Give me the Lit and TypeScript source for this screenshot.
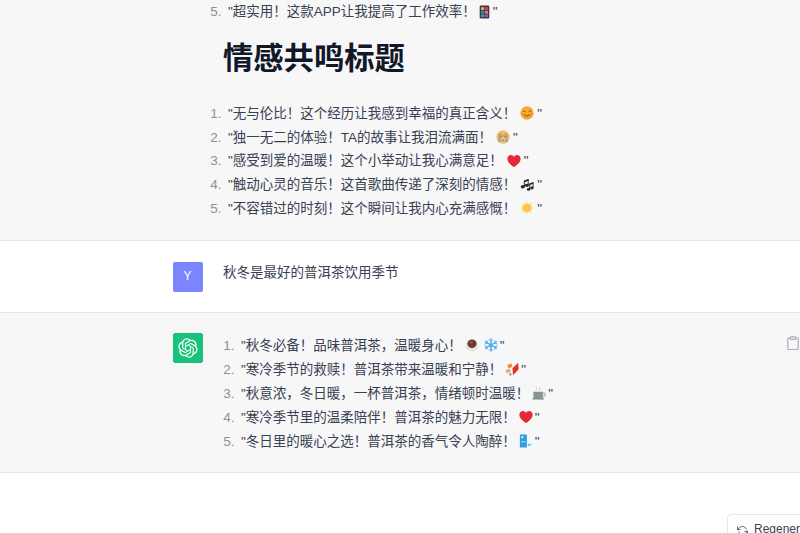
import { LitElement, html, css, svg } from "lit";
import { customElement } from "lit/decorators.js";

const OPENAI = "M37.5324 16.8707C37.9808 15.5241 38.1363 14.0974 37.9886 12.6859C37.8409 11.2744 37.3934 9.91076 36.676 8.68622C35.6126 6.83404 33.9882 5.3676 32.0373 4.4985C30.0864 3.62941 27.9098 3.40259 25.8215 3.85078C24.8796 2.7893 23.7219 1.94125 22.4257 1.36341C21.1295 0.785575 19.7249 0.491269 18.3058 0.500197C16.1708 0.495044 14.0893 1.16803 12.3614 2.42214C10.6335 3.67624 9.34853 5.44666 8.6917 7.47815C7.30085 7.76286 5.98686 8.3414 4.8377 9.17505C3.68854 10.0087 2.73073 11.0782 2.02839 12.312C0.956464 14.1591 0.498905 16.2988 0.721698 18.4228C0.944492 20.5467 1.83612 22.5449 3.268 24.1293C2.81966 25.4759 2.66413 26.9026 2.81182 28.3141C2.95951 29.7256 3.40701 31.0892 4.12437 32.3138C5.18791 34.1659 6.8123 35.6322 8.76321 36.5013C10.7141 37.3704 12.8907 37.5973 14.9789 37.1492C15.9208 38.2107 17.0786 39.0587 18.3747 39.6366C19.6709 40.2144 21.0755 40.5087 22.4946 40.4998C24.6307 40.5054 26.7133 39.8321 28.4418 38.5772C30.1704 37.3223 31.4556 35.5506 32.1119 33.5179C33.5027 33.2332 34.8167 32.6547 35.9659 31.821C37.115 30.9874 38.0728 29.9178 38.7752 28.684C39.8458 26.8371 40.3023 24.6979 40.0789 22.5748C39.8556 20.4517 38.9639 18.4544 37.5324 16.8707ZM22.4978 37.8849C20.7443 37.8874 19.0459 37.2733 17.6994 36.1501C17.7601 36.117 17.8666 36.0586 17.936 36.0161L25.9004 31.4156C26.1003 31.3019 26.2663 31.137 26.3813 30.9378C26.4964 30.7386 26.5563 30.5124 26.5549 30.2825V19.0542L29.9213 20.998C29.9389 21.0068 29.9541 21.0198 29.9656 21.0359C29.977 21.052 29.9842 21.0707 29.9867 21.0902V30.3889C29.9842 32.375 29.1946 34.2791 27.7909 35.6841C26.3872 37.0892 24.4838 37.8806 22.4978 37.8849ZM6.39227 31.0064C5.51397 29.4888 5.19742 27.7107 5.49804 25.9832C5.55718 26.0187 5.66048 26.0818 5.73461 26.1244L13.699 30.7248C13.8975 30.8408 14.1233 30.902 14.3532 30.902C14.583 30.902 14.8088 30.8408 15.0073 30.7248L24.731 25.1103V28.9979C24.7321 29.0177 24.7283 29.0376 24.7199 29.0556C24.7115 29.0736 24.6988 29.0893 24.6829 29.1012L16.6317 33.7497C14.9096 34.7416 12.8643 35.0097 10.9447 34.4954C9.02506 33.9811 7.38785 32.7263 6.39227 31.0064ZM4.29707 13.6194C5.17156 12.0998 6.55279 10.9364 8.19885 10.3327C8.19885 10.4013 8.19491 10.5228 8.19491 10.6071V19.808C8.19351 20.0378 8.25334 20.2638 8.36823 20.4629C8.48312 20.6619 8.64893 20.8267 8.84863 20.9404L18.5723 26.5542L15.206 28.4979C15.1894 28.5089 15.1703 28.5155 15.1505 28.5173C15.1307 28.5191 15.1107 28.516 15.0924 28.5082L7.04046 23.8557C5.32135 22.8601 4.06716 21.2235 3.55289 19.3046C3.03862 17.3858 3.30624 15.3413 4.29707 13.6194ZM31.955 20.0556L22.2312 14.4411L25.5976 12.4981C25.6142 12.4872 25.6333 12.4805 25.6531 12.4787C25.6729 12.4769 25.6928 12.4801 25.7111 12.4879L33.7631 17.1364C34.9967 17.849 36.0017 18.8982 36.6606 20.1613C37.3194 21.4244 37.6047 22.849 37.4832 24.2684C37.3617 25.6878 36.8382 27.0432 35.9743 28.1759C35.1103 29.3086 33.9415 30.1717 32.6047 30.6641C32.6047 30.5947 32.6047 30.4733 32.6047 30.3889V21.188C32.6066 20.9586 32.5474 20.7328 32.4332 20.5338C32.319 20.3348 32.154 20.1698 31.955 20.0556ZM35.3055 15.0128C35.2464 14.9765 35.1431 14.9142 35.069 14.8717L27.1045 10.2712C26.906 10.1554 26.6803 10.0943 26.4504 10.0943C26.2206 10.0943 25.9948 10.1554 25.7963 10.2712L16.0726 15.8858V11.9982C16.0715 11.9783 16.0753 11.9585 16.0837 11.9405C16.0921 11.9225 16.1048 11.9068 16.1207 11.8949L24.1719 7.25025C25.4053 6.53903 26.8158 6.19376 28.2383 6.25482C29.6608 6.31589 31.0364 6.78077 32.2044 7.59508C33.3723 8.40939 34.2842 9.53945 34.8334 10.8531C35.3826 12.1667 35.5464 13.6095 35.3055 15.0128ZM14.2424 21.9419L10.8752 19.9981C10.8576 19.9893 10.8423 19.9763 10.8309 19.9602C10.8195 19.9441 10.8122 19.9254 10.8098 19.9058V10.6071C10.8107 9.18295 11.2173 7.78848 11.9819 6.58696C12.7466 5.38544 13.8377 4.42659 15.1275 3.82264C16.4173 3.21869 17.8524 2.99464 19.2649 3.1767C20.6775 3.35876 22.0089 3.93941 23.1034 4.85067C23.0427 4.88379 22.937 4.94215 22.8668 4.98473L14.9024 9.58517C14.7025 9.69878 14.5366 9.86356 14.4215 10.0626C14.3065 10.2616 14.2466 10.4877 14.2479 10.7175L14.2424 21.9419ZM16.071 17.9991L20.4018 15.4978L24.7325 17.9975V22.9985L20.4018 25.4983L16.071 22.9985V17.9991Z";

const emoji = (body: unknown) =>
  html`<svg class="emoji" viewBox="0 0 16 16" aria-hidden="true">${body}</svg>`;

const E = {
  phone: html`<svg class="emoji narrow" viewBox="2 0 12 16" aria-hidden="true">
    <rect x="2.5" y=".5" width="11" height="15" rx="1.5" fill="#3b3560"></rect>
    <rect x="4" y="2.5" width="3.6" height="3.2" fill="#e8b23a"></rect>
    <rect x="8.4" y="2.5" width="3.6" height="3.2" fill="#d9483b"></rect>
    <rect x="4" y="6.6" width="3.6" height="3.2" fill="#3b82d0"></rect>
    <rect x="8.4" y="6.6" width="3.6" height="3.2" fill="#e8843a"></rect>
    <rect x="4" y="10.7" width="3.6" height="3" fill="#4aa564"></rect>
    <rect x="8.4" y="10.7" width="3.6" height="3" fill="#a14fc0"></rect>
  </svg>`,
  smile: emoji(svg`<circle cx="8" cy="8" r="7.6" fill="#f6a832"/><path d="M3.5 6.4q1.3-1.5 2.6 0M9.9 6.4q1.3-1.5 2.6 0" stroke="#7a4a12" stroke-width="1" fill="none"/><path d="M4.4 9.6q3.6 3.8 7.2 0" stroke="#7a4a12" stroke-width="1.1" fill="none"/><ellipse cx="3" cy="9.2" rx="1.4" ry="1" fill="#f28b5c"/><ellipse cx="13" cy="9.2" rx="1.4" ry="1" fill="#f28b5c"/>`),
  cry: emoji(svg`<circle cx="8" cy="8" r="7.6" fill="#f4bd62"/><circle cx="5" cy="6.6" r="1.9" fill="#fff" stroke="#6b4a2a" stroke-width=".7"/><circle cx="11" cy="6.6" r="1.9" fill="#fff" stroke="#6b4a2a" stroke-width=".7"/><circle cx="5" cy="6.8" r=".8" fill="#4a3222"/><circle cx="11" cy="6.8" r=".8" fill="#4a3222"/><path d="M5.8 12q2.2-2 4.4 0z" fill="#8a3a2a"/><path d="M2.6 9.5h2.2l.2 4.5H3zM11.2 9.5h2.2l-.4 4.5h-2z" fill="#6fa8e0"/>`),
  heart: emoji(svg`<path d="M8 15.2C3.2 11.6.4 8.9.4 5.5.4 2.9 2.4 1.2 4.5 1.2c1.5 0 2.8.8 3.5 2.1.7-1.3 2-2.1 3.5-2.1 2.1 0 4.1 1.7 4.1 4.3 0 3.4-2.8 6.1-7.6 9.7z" fill="#e5283a"/>`),
  notes: emoji(svg`<g fill="#26262a"><path d="M4.6 2.8l5-1.8v2.2L4.6 5z"/><path d="M4.4 3.2h1.1v6.6H4.4zM8.8 1.4h1.1v6.8H8.8z"/><ellipse cx="3.2" cy="10" rx="2.4" ry="1.9"/><ellipse cx="7.8" cy="8.4" rx="2.4" ry="1.9"/><path d="M10.6 6.2l4.6-1.6v2l-4.6 1.6z"/><path d="M10.6 6.6h1v6h-1zM14.4 5h1v6h-1z"/><ellipse cx="9.8" cy="13" rx="2" ry="1.7"/><ellipse cx="13.6" cy="11.4" rx="2" ry="1.7"/></g>`),
  sun: emoji(svg`<path d="M8 .2l1.7 3.3 3.6-1.4-.6 3.8 3.1 2-3.1 2 .6 3.8-3.6-1.3L8 15.8l-1.7-3.4-3.6 1.3.6-3.8L.2 7.9l3.1-2-.6-3.8 3.6 1.4z" fill="#fbe08a"/><circle cx="8" cy="8" r="4.6" fill="#f7c948"/>`),
  tea: emoji(svg`<ellipse cx="8" cy="8.5" rx="7.4" ry="7" fill="#e6e4e0"/><ellipse cx="8" cy="6.6" rx="5.2" ry="4.8" fill="#6b3a2a"/><ellipse cx="7" cy="5.2" rx="2" ry="1.1" fill="#96604a"/>`),
  snow: emoji(svg`<g stroke="#4fb0ec" stroke-linecap="round" fill="none"><path d="M8 .8v14.4M1.8 4.4l12.4 7.2M14.2 4.4L1.8 11.6" stroke-width="1.6"/><path d="M5.8 2L8 4.2 10.2 2M5.8 14L8 11.8l2.2 2.2M1 6.8l3-.8-.8-3M15 9.2l-3 .8.8 3M15 6.8l-3-.8.8-3M1 9.2l3 .8-.8 3" stroke-width="1.1"/></g>`),
  gift: emoji(svg`<path d="M2.6 3.4l4.8-2 1 4.4-4.6 1.4z" fill="#e78c48"/><path d="M.6 9l5-1.4 1 3.8-4.4 1.4z" fill="#eaa873"/><path d="M4.4 13.4l2.6-.9.7 2.6-2.5.6z" fill="#d8853e"/><path d="M9.2 15L8.6 7.2 15 .8l.6 7.4z" fill="#e52f2a"/>`),
  cup: emoji(svg`<path d="M1.6 6.5h10.8v6.7a1 1 0 01-1 1H2.6a1 1 0 01-1-1z" fill="#8a9488"/><path d="M12.4 8h1.6a1 1 0 011 1v1.5a1 1 0 01-1 1h-1.6" stroke="#8a9488" fill="none"/><rect x=".6" y="14" width="13" height="1.4" fill="#5f8d7a"/><path d="M4.5 1.5q1.2 1.2 0 3.5M8.5 1.5q1.2 1.2 0 3.5" stroke="#c5c8c2" stroke-width="1" fill="none"/>`),
  drink: emoji(svg`<rect x="1" y=".5" width="8" height="15" rx="1" fill="#2f9de4"/><rect x="2.6" y="2.5" width="2.4" height="2.4" fill="#cfe9fb"/><rect x="2.6" y="8" width="4.6" height="1.6" fill="#8fd0f5"/><path d="M10 10.6l5.6 1.6-5.6 2.2z" fill="#7cc9f0"/>`),
};

type Item = [string, unknown];

const FIRST: Item[] = [
  ['"无与伦比！这个经历让我感到幸福的真正含义！', E.smile],
  ['"独一无二的体验！TA的故事让我泪流满面！', E.cry],
  ['"感受到爱的温暖！这个小举动让我心满意足！', E.heart],
  ['"触动心灵的音乐！这首歌曲传递了深刻的情感！', E.notes],
  ['"不容错过的时刻！这个瞬间让我内心充满感慨！', E.sun],
];

const SECOND: { text: string; icons: unknown[] }[] = [
  { text: '"秋冬必备！品味普洱茶，温暖身心！', icons: [E.tea, E.snow] },
  { text: '"寒冷季节的救赎！普洱茶带来温暖和宁静！', icons: [E.gift] },
  { text: '"秋意浓，冬日暖，一杯普洱茶，情绪顿时温暖！', icons: [E.cup] },
  { text: '"寒冷季节里的温柔陪伴！普洱茶的魅力无限！', icons: [E.heart] },
  { text: '"冬日里的暖心之选！普洱茶的香气令人陶醉！', icons: [E.drink] },
];

@customElement("app-root")
export class AppRoot extends LitElement {
  static styles = css`
    :host {
      display: block;
      height: 533px;
      overflow: hidden;
      position: relative;
      background: #fff;
      color: #374151;
      font-family: "Liberation Sans", "Noto Sans CJK SC", sans-serif;
      font-size: 13.5px;
      line-height: 23.8px;
    }
    section { border-bottom: 1px solid #e5e5e8; }
    .gray { background: #f7f7f8; }
    .row {
      display: flex;
      gap: 20px;
      width: 627px;
      margin-left: 173px;
    }
    .top { padding-bottom: 19.2px; }
    .user { padding: 21px 0 20px; }
    .bot { padding: 20px 0 18px; position: relative; }
    .avatar {
      flex: none;
      width: 30px;
      height: 30px;
      border-radius: 2px;
      display: flex;
      align-items: center;
      justify-content: center;
      color: #fff;
      font-size: 12px;
    }
    .avatar.y { background: #7b85ff; padding-right: 1px; box-sizing: border-box; }
    .avatar.g { background: #19c37d; }
    .avatar svg { width: 20px; height: 20px; }
    .spacer { flex: none; width: 30px; }
    .body { min-width: 0; flex: 1; }
    .msg { margin: -1px 0 0; }
    ol {
      margin: 0;
      padding: 0 0 0 5px;
    }
    ol.wide {
      padding-left: 18px;
      margin-top: 1px;
      line-height: 24px;
    }
    li::marker {
      color: #8f8f98;
      content: counter(list-item) ". \\2009";
    }
    h1 {
      margin: 17px 0 25px 0;
      font-size: 30.3px;
      line-height: 36px;
      font-weight: 700;
      color: #111827;
    }
    .emoji {
      display: inline-block;
      width: 14px;
      height: 14px;
      vertical-align: -2.5px;
      margin: 0 3px 0 4px;
    }
    .wide .emoji { margin: 0 2px 0 3px; }
    .emoji.narrow { width: 11px; margin: 0 3px 0 3px; }
    .copy {
      position: absolute;
      right: 0;
      top: 23px;
      width: 14px;
      height: 14px;
      color: #acacbe;
    }
    .regen {
      position: absolute;
      left: 727px;
      top: 514px;
      width: 140px;
      height: 32px;
      box-sizing: border-box;
      border: 1px solid #e5e5e8;
      border-radius: 4px;
      background: #fff;
      display: flex;
      align-items: center;
      gap: 6px;
      padding: 0 9px;
      color: #40414f;
      font-size: 12px;
      white-space: nowrap;
    }
    .regen svg { width: 11px; height: 11px; flex: none; color: #565869; }
  `;

  render() {
    return html`
      <section class="gray top">
        <div class="row">
          <div class="spacer"></div>
          <div class="body">
            <ol start="5">
              <li>"超实用！这款APP让我提高了工作效率！${E.phone}"</li>
            </ol>
            <h1>情感共鸣标题</h1>
            <ol>
              ${FIRST.map(([t, i]) => html`<li>${t}${i}"</li>`)}
            </ol>
          </div>
        </div>
      </section>
      <section class="user">
        <div class="row">
          <div class="avatar y">Y</div>
          <p class="msg body">秋冬是最好的普洱茶饮用季节</p>
        </div>
      </section>
      <section class="gray bot">
        <div class="row">
          <div class="avatar g">
            <svg viewBox="0 0 41 41" fill="#fff"><path d=${OPENAI}></path></svg>
          </div>
          <div class="body">
            <ol class="wide">
              ${SECOND.map((s) => html`<li>${s.text}${s.icons}"</li>`)}
            </ol>
          </div>
        </div>
        <svg class="copy" viewBox="0 0 14 14" fill="none" stroke="currentColor" stroke-width="1.2">
          <path d="M4 2H2.8a1 1 0 00-1 1v9.5a1 1 0 001 1h8.4a1 1 0 001-1V3a1 1 0 00-1-1H10"></path>
          <rect x="4.2" y=".8" width="5.6" height="2.6" rx=".6"></rect>
        </svg>
      </section>
      <div class="regen">
        <svg viewBox="0 0 24 24" fill="none" stroke="currentColor" stroke-width="2" stroke-linecap="round" stroke-linejoin="round">
          <polyline points="1 4 1 10 7 10"></polyline>
          <polyline points="23 20 23 14 17 14"></polyline>
          <path d="M20.49 9A9 9 0 0 0 5.64 5.64L1 10m22 4l-4.64 4.36A9 9 0 0 1 3.51 15"></path>
        </svg>
        <span>Regenerate response</span>
      </div>
    `;
  }
}
